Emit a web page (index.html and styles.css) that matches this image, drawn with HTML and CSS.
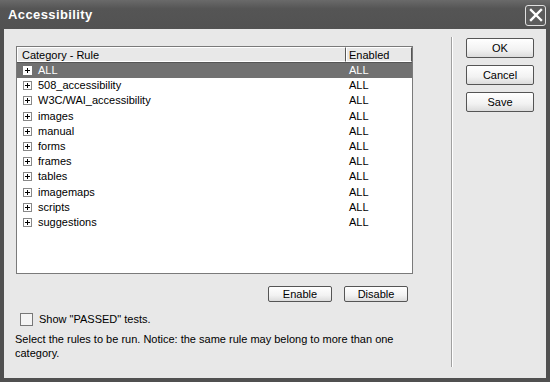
FILE: index.html
```html
<!DOCTYPE html>
<html lang="en">
<head>
    <meta charset="UTF-8">
    <title>Accessibility</title>
    <link rel="stylesheet" href="styles.css">
</head>
<body>
    <div class="dlg">
        <div class="titlebar">
            <span class="title">Accessibility</span>
            <a class="close" href="javascript:;">
                <svg width="14" height="14" viewBox="0 0 14 14"><path d="M2 2 L12 12 M12 2 L2 12" stroke="#fff" stroke-width="2.4" stroke-linecap="square"/></svg>
            </a>
        </div>
        <div class="body">
            <div class="main">
                <div class="list">
                    <div class="head">
                        <div class="c1">Category - Rule</div>
                        <div class="c2">Enabled</div>
                    </div>
                    <ul class="rows">
                        <li class="sel"><span class="c1"><i class="plus"></i>ALL</span><span class="c2">ALL</span></li>
                        <li><span class="c1"><i class="plus"></i>508_accessibility</span><span class="c2">ALL</span></li>
                        <li><span class="c1"><i class="plus"></i>W3C/WAI_accessibility</span><span class="c2">ALL</span></li>
                        <li><span class="c1"><i class="plus"></i>images</span><span class="c2">ALL</span></li>
                        <li><span class="c1"><i class="plus"></i>manual</span><span class="c2">ALL</span></li>
                        <li><span class="c1"><i class="plus"></i>forms</span><span class="c2">ALL</span></li>
                        <li><span class="c1"><i class="plus"></i>frames</span><span class="c2">ALL</span></li>
                        <li><span class="c1"><i class="plus"></i>tables</span><span class="c2">ALL</span></li>
                        <li><span class="c1"><i class="plus"></i>imagemaps</span><span class="c2">ALL</span></li>
                        <li><span class="c1"><i class="plus"></i>scripts</span><span class="c2">ALL</span></li>
                        <li><span class="c1"><i class="plus"></i>suggestions</span><span class="c2">ALL</span></li>
                    </ul>
                </div>
                <div class="listbtns">
                    <button class="btn">Enable</button>
                    <button class="btn">Disable</button>
                </div>
                <label class="check"><i class="box"></i>Show "PASSED" tests.</label>
                <p class="note">Select the rules to be run. Notice: the same rule may belong to more than one category.</p>
            </div>
            <div class="sep"></div>
            <div class="side">
                <button class="btn big">OK</button>
                <button class="btn big">Cancel</button>
                <button class="btn big">Save</button>
            </div>
        </div>
    </div>
</body>
</html>
```

FILE: styles.css
```css
/* reset */
body{
    margin: 0;
    font-family: "Liberation Sans", Arial, sans-serif;
    font-size: 11px;
    color: #000;
}
ul{
    margin: 0;
    padding: 0;
    list-style: none;
}
/* window */
.dlg{
    width: 550px;
    height: 382px;
    box-sizing: border-box;
    background: #e8e8e8;
    border: 4px solid #505050;
    border-top: 0;
    display: flex;
    flex-direction: column;
}
.titlebar{
    height: 29px;
    margin: 0 -4px;
    background: linear-gradient(#6a6a6a, #555 30%, #525252);
    display: flex;
    align-items: center;
    justify-content: space-between;
    padding: 0 4px 0 8px;
}
.title{
    color: #fff;
    font-size: 13px;
    font-weight: bold;
    letter-spacing: 0.4px;
}
.close{
    width: 19px;
    height: 19px;
    border: 1px solid #e0e0e0;
    border-radius: 3px;
    background: #5c5c5c;
    display: flex;
    align-items: center;
    justify-content: center;
    margin-top: 1px;
}
.body{
    flex: 1;
    display: flex;
}
.main{
    width: 397px;
    padding: 17px 38px 0 12px;
}
/* list */
.list{
    height: 226px;
    border: 1px solid #7a7a7a;
    background: #fff;
}
.head{
    display: flex;
    height: 15px;
    line-height: 14px;
    border-bottom: 1px solid #555;
}
.head div{
    box-sizing: border-box;
    border: 1px solid #fff;
    border-right-color: #555;
    background: #e8e8e8;
}
.head .c1{
    width: 329px;
    padding-left: 4px;
}
.head .c2{
    flex: 1;
    padding-left: 2px;
}
.rows li{
    display: flex;
    height: 15.2px;
    line-height: 15px;
}
.rows .c1{
    width: 329px;
    display: flex;
    align-items: center;
    padding-left: 6px;
    box-sizing: border-box;
}
.rows .c2{
    padding-left: 3px;
}
.rows .sel{
    background: #717171;
    color: #fff;
}
.plus{
    width: 7px;
    height: 7px;
    border: 1px solid #888;
    background: #fff;
    margin-right: 6px;
    position: relative;
}
.plus::before,
.plus::after{
    content: "";
    position: absolute;
    background: #000;
}
.plus::before{
    left: 1px;
    top: 3px;
    width: 5px;
    height: 1px;
}
.plus::after{
    left: 3px;
    top: 1px;
    width: 1px;
    height: 5px;
}
.sel .plus{
    border-color: #fff;
}
/* buttons */
.btn{
    font-family: inherit;
    font-size: 11px;
    height: 16px;
    padding: 0;
    border: 1px solid #555;
    border-radius: 2px;
    background: linear-gradient(#fff, #f2f2f2 60%, #dcdcdc);
    color: #000;
}
.listbtns{
    display: flex;
    justify-content: flex-end;
    gap: 12px;
    margin-top: 12px;
    padding-right: 5px;
}
.listbtns .btn{
    width: 64px;
}
.check{
    display: flex;
    align-items: center;
    margin: 10px 0 0 4px;
    height: 14px;
}
.box{
    width: 11px;
    height: 11px;
    border: 1px solid #777;
    background: #f4f4f4;
    margin-right: 6px;
}
.note{
    margin: 6px 0 0 -1px;
    width: 392px;
    line-height: 14px;
}
.sep{
    width: 1px;
    margin: 8px 0 11px;
    background: #a0a0a0;
    border-right: 1px solid #fff;
}
.side{
    display: flex;
    flex-direction: column;
    gap: 7px;
    padding: 9px 0 0 13px;
}
.btn.big{
    width: 68px;
    height: 20px;
}
```
